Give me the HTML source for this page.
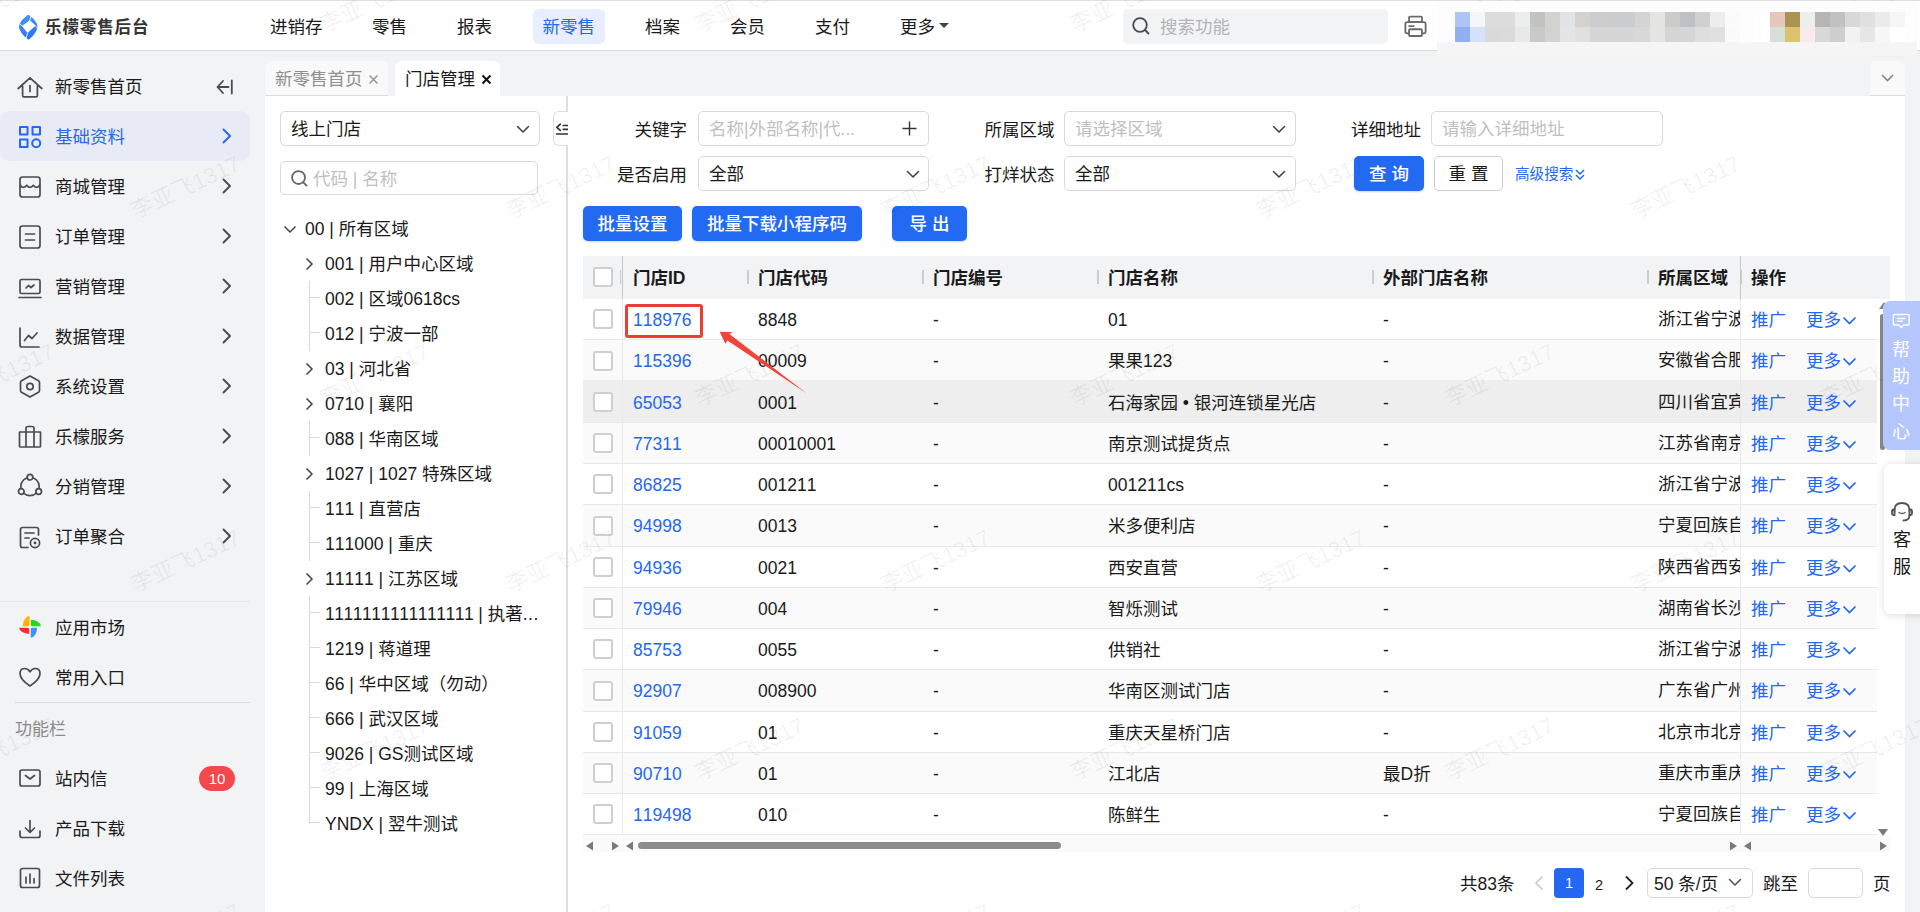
<!DOCTYPE html>
<html lang="zh-CN"><head><meta charset="utf-8"><title>门店管理</title>
<style>
*{box-sizing:border-box;margin:0;padding:0}
html,body{width:1920px;height:912px;overflow:hidden}
body{position:relative;background:#f2f3f5;font-family:"Liberation Sans", "Noto Sans CJK SC", sans-serif;font-size:17.5px;color:#1a1a1a;line-height:1;font-kerning:none}
.abs{position:absolute}
#top{position:absolute;left:0;top:0;width:1920px;height:51px;background:#fff;border-top:1px solid #dddfdd;border-bottom:1px solid #d9d9d9}
.nav{position:absolute;top:0;height:50px;line-height:52px;font-size:17.5px;color:#1a1a1a;white-space:nowrap}
.nav.on{top:8px;height:35px;line-height:36px;background:#e8eefd;color:#2468f2;border-radius:6px;padding:0 9.5px}
.t{position:absolute;white-space:nowrap;transform:translateY(-50%);margin-top:1px}
#side{position:absolute;left:0;top:51px;width:265px;height:861px;background:#f2f3f5}
.mi{position:absolute;left:0;width:250px;height:50px;border-radius:10px}
.mi.on{background:#e8ebf6;color:#2468f2}
.mi .tx{position:absolute;left:55px;top:0;line-height:52px;white-space:nowrap}
.mi svg{position:absolute}
.ic{fill:none;stroke:#4a4a55;stroke-width:1.7;stroke-linecap:round;stroke-linejoin:round}

.inp{position:absolute;height:35px;border:1px solid #d9d9d9;border-radius:5px;background:#fff}
.ph{color:#bfbfbf}
.tr{position:absolute;white-space:nowrap;transform:translateY(-50%);margin-top:1px}

#wm{z-index:3;position:absolute;left:0;top:0;width:1920px;height:912px;overflow:hidden;pointer-events:none}
#wm span{position:absolute;white-space:nowrap;font-size:22.500px;color:rgba(0,0,0,.058);transform:translate(-50%,-50%) rotate(-25deg)}
</style></head>
<body>
<div id="top">
<svg class="abs" style="left:17.800px;top:13.200px" width="20.300" height="26.560" viewBox="100 105 260 340"><defs><linearGradient id="lg" x1="0" y1="0" x2="0.300" y2="1"><stop offset="0" stop-color="#4b97f8"/><stop offset="1" stop-color="#2a74f5"/></linearGradient></defs><path d="M232 116 C290 150 345 215 350 265 C345 330 290 395 235 435 C175 395 118 330 113 265 C118 215 175 150 232 116Z" fill="url(#lg)"/><path d="M250 186 L326 252 L222 348 L150 258Z" fill="#fff"/><path d="M268 118 L250 192 M320 252 L356 296 M224 344 L200 425 M154 258 L108 218" stroke="#fff" stroke-width="11" fill="none"/></svg>
<div class="t" style="left:45px;top:26px;font-size:16.500px;font-weight:bold;color:#333;letter-spacing:0.900px;margin-top:0">乐檬零售后台</div>
<div class="nav" style="left:270px">进销存</div>
<div class="nav" style="left:372px">零售</div>
<div class="nav" style="left:457px">报表</div>
<div class="nav" style="left:645px">档案</div>
<div class="nav" style="left:730px">会员</div>
<div class="nav" style="left:815px">支付</div>
<div class="nav" style="left:900px">更多</div>
<div class="nav on" style="left:533px">新零售</div>
<div class="abs" style="left:939px;top:22px;width:0;height:0;border-left:5px solid transparent;border-right:5px solid transparent;border-top:5px solid #444"></div>
<div class="abs" style="left:1123px;top:8px;width:265px;height:35px;background:#f2f3f5;border-radius:5px"></div>
<svg class="abs" style="left:1131px;top:15px" width="20" height="20" viewBox="0 0 20 20"><circle cx="9" cy="9" r="6.8" class="ic" style="stroke:#4a4a4a;stroke-width:1.8"/><path d="M14 14 L17.5 17.5" class="ic" style="stroke:#4a4a4a;stroke-width:1.8"/></svg>
<div class="t" style="left:1160px;top:26px;color:#b3b3b3">搜索功能</div>
</div>
<div id="side">
<div class="mi" style="top:10px">
<svg style="left:17px;top:13.5px;" width="26" height="24" viewBox="0 0 26 24"><path class="ic" d="M1.200 13.500 L13 2.800 L24.800 13.500 M5.600 10.500 V20.500 Q5.600 21.900 7 21.900 H19 Q20.400 21.900 20.400 20.500 V10.500 M13 10.500 V16.500"/></svg>
<span class="tx">新零售首页</span>
<svg style="left:216px;top:15px;" width="18" height="20" viewBox="0 0 18 20"><path class="ic" d="M1.500 11 H12.500 M7 5 L1.500 11 L7 17 M15.800 4.500 V17.500" style="stroke-width:1.8"/></svg>
</div>
<div class="mi on" style="top:60px">
<svg style="left:17px;top:13.5px;" width="26" height="24" viewBox="0 0 26 24"><g class="ic" style="stroke:#2468f2;stroke-width:2"><rect x="3" y="2" width="7.5" height="7.5"/><rect x="15.5" y="2" width="7.5" height="7.5"/><rect x="3" y="14.500" width="7.5" height="7.5"/><circle cx="19.2" cy="18.2" r="4"/></g></svg>
<span class="tx">基础资料</span>
<svg style="left:220.5px;top:16px;" width="11" height="18" viewBox="0 0 11 18"><path class="ic" d="M2.500 2.500 L9 9 L2.500 15.500" style="stroke-width:1.9;stroke:#2468f2"/></svg>
</div>
<div class="mi" style="top:110px">
<svg style="left:17px;top:13.5px;" width="26" height="24" viewBox="0 0 26 24"><path class="ic" d="M3 4.5 Q3 2 5.500 2 H20.500 Q23 2 23 4.500 V19.500 Q23 22 20.500 22 H5.500 Q3 22 3 19.500 Z M3 8.500 Q3.500 12.300 6.500 12.300 Q8.500 12.300 9.700 10.300 Q11 12.300 13 12.300 Q15 12.300 16.300 10.300 Q17.500 12.300 19.500 12.300 Q22.500 12.300 23 8.500"/></svg>
<span class="tx">商城管理</span>
<svg style="left:220.5px;top:16px;" width="11" height="18" viewBox="0 0 11 18"><path class="ic"  d="M2.500 2.500 L9 9 L2.500 15.500" style="stroke-width:1.9"/></svg>
</div>
<div class="mi" style="top:160px">
<svg style="left:17px;top:12.5px;" width="26" height="26" viewBox="0 0 26 26"><path class="ic" d="M3 4.5 Q3 2 5.500 2 H20.500 Q23 2 23 4.500 V21.500 Q23 24 20.500 24 H5.500 Q3 24 3 21.500 Z M8.5 10 H17.5 M8.5 16 H17.5"/></svg>
<span class="tx">订单管理</span>
<svg style="left:220.5px;top:16px;" width="11" height="18" viewBox="0 0 11 18"><path class="ic"  d="M2.500 2.500 L9 9 L2.500 15.500" style="stroke-width:1.9"/></svg>
</div>
<div class="mi" style="top:210px">
<svg style="left:17px;top:15.5px;" width="26" height="23" viewBox="0 0 26 23"><path class="ic" d="M3 4 Q3 2.500 4.500 2.500 H21.500 Q23 2.500 23 4 V15 Q23 16.500 21.500 16.500 H4.500 Q3 16.500 3 15 Z M2 20.5 H24 M9 11 L11.5 8.5 L14 10.5 L17 8"/></svg>
<span class="tx">营销管理</span>
<svg style="left:220.5px;top:16px;" width="11" height="18" viewBox="0 0 11 18"><path class="ic"  d="M2.500 2.500 L9 9 L2.500 15.500" style="stroke-width:1.9"/></svg>
</div>
<div class="mi" style="top:260px">
<svg style="left:17px;top:14.5px;" width="26" height="23" viewBox="0 0 26 23"><path class="ic" d="M3 2 V19 Q3 21 5 21 H22 M7.5 14.5 L11.5 9.500 L15 12.500 L20 7"/></svg>
<span class="tx">数据管理</span>
<svg style="left:220.5px;top:16px;" width="11" height="18" viewBox="0 0 11 18"><path class="ic"  d="M2.500 2.500 L9 9 L2.500 15.500" style="stroke-width:1.9"/></svg>
</div>
<div class="mi" style="top:310px">
<svg style="left:17px;top:13px;" width="26" height="25" viewBox="0 0 26 25"><path class="ic" d="M13 2 L21.5 6.800 Q22.500 7.400 22.500 8.500 V16.500 Q22.500 17.600 21.500 18.200 L13 23 L4.500 18.200 Q3.500 17.600 3.500 16.500 V8.500 Q3.500 7.400 4.500 6.800 Z"/><circle class="ic" cx="13" cy="12.5" r="3.2"/></svg>
<span class="tx">系统设置</span>
<svg style="left:220.5px;top:16px;" width="11" height="18" viewBox="0 0 11 18"><path class="ic"  d="M2.500 2.500 L9 9 L2.500 15.500" style="stroke-width:1.9"/></svg>
</div>
<div class="mi" style="top:360px">
<svg style="left:17px;top:13px;" width="26" height="25" viewBox="0 0 26 25"><path class="ic" d="M2.500 8 H23.500 V22 Q23.500 23 22.500 23 H3.500 Q2.500 23 2.500 22 Z M9 8 V4.500 Q9 2.500 11 2.500 H15 Q17 2.500 17 4.500 V8 M9 8 V23 M17 8 V23"/></svg>
<span class="tx">乐檬服务</span>
<svg style="left:220.5px;top:16px;" width="11" height="18" viewBox="0 0 11 18"><path class="ic"  d="M2.500 2.500 L9 9 L2.500 15.500" style="stroke-width:1.9"/></svg>
</div>
<div class="mi" style="top:410px">
<svg style="left:17px;top:12px;" width="26" height="26" viewBox="0 0 26 26"><g class="ic"><circle cx="13" cy="13.5" r="9.2"/><circle cx="13" cy="4.2" r="2.8" fill="#f2f3f5"/><circle cx="4.3" cy="18.5" r="2.8" fill="#f2f3f5"/><circle cx="21.700" cy="18.500" r="2.800" fill="#f2f3f5"/></g></svg>
<span class="tx">分销管理</span>
<svg style="left:220.5px;top:16px;" width="11" height="18" viewBox="0 0 11 18"><path class="ic"  d="M2.500 2.500 L9 9 L2.500 15.500" style="stroke-width:1.9"/></svg>
</div>
<div class="mi" style="top:460px">
<svg style="left:17px;top:14px;" width="26" height="26" viewBox="0 0 26 26"><path class="ic" d="M11 22.500 H5.500 Q3.500 22.500 3.500 20.500 V4.500 Q3.500 2.500 5.500 2.500 H19.500 Q21.500 2.500 21.500 4.500 V10 M8 8 H17 M8 13 H12"/><circle class="ic" cx="18" cy="18" r="4.6"/><circle cx="18" cy="18" r="1.4" fill="#4a4a55"/></svg>
<span class="tx">订单聚合</span>
<svg style="left:220.5px;top:16px;" width="11" height="18" viewBox="0 0 11 18"><path class="ic"  d="M2.500 2.500 L9 9 L2.500 15.500" style="stroke-width:1.9"/></svg>
</div>
<div class="abs" style="left:0;top:550px;width:250px;height:1px;background:#e6e7ea"></div>
<div class="mi" style="top:551px">
<svg style="left:17px;top:11px;" width="26" height="26" viewBox="0 0 26 26"><path d="M12.500 3.100 A6.700 10.100 0 0 0 5.830 13.200 L12.500 13.200Z" fill="#ffb300"/><path d="M13.730 6.800 A10.100 6.400 0 0 1 23.850 13.200 L13.730 13.200Z" fill="#2ad52a"/><path d="M20.050 14.700 A6.300 10.100 0 0 1 13.730 24.800 L13.730 14.700Z" fill="#3395ff"/><path d="M2.130 14.700 A10.100 6.200 0 0 0 12.250 20.900 L12.250 14.700Z" fill="#ff2d2d"/><circle cx="13" cy="14" r="1.700" fill="#fff" opacity=".9"/></svg>
<span class="tx">应用市场</span></div>
<div class="mi" style="top:601px">
<svg style="left:17px;top:13px;" width="26" height="24" viewBox="0 0 26 24"><path class="ic" d="M13 21 Q3 14.500 3 8.500 Q3 3.500 7.800 3.500 Q11 3.500 13 6.800 Q15 3.500 18.200 3.500 Q23 3.500 23 8.500 Q23 14.500 13 21 Z"/></svg>
<span class="tx">常用入口</span></div>
<div class="abs" style="left:15px;top:651px;width:235px;height:1px;background:#d8d9dc"></div>
<div class="t" style="left:15px;top:677px;font-size:17px;color:#8c8c8c">功能栏</div>
<div class="mi" style="top:702px">
<svg style="left:17px;top:14px;" width="26" height="22" viewBox="0 0 26 22"><path class="ic" d="M3 5 Q3 3 5 3 H21 Q23 3 23 5 V17 Q23 19 21 19 H5 Q3 19 3 17 Z M8.5 8.500 L13 12 L17.500 8.500"/></svg>
<span class="tx">站内信</span>
<span class="abs" style="left:199px;top:13px;width:36px;height:25px;border-radius:13px;background:#f5484d;color:#fff;font-size:15px;line-height:25px;text-align:center">10</span></div>
<div class="mi" style="top:752px">
<svg style="left:17px;top:15px;" width="26" height="22" viewBox="0 0 26 22"><path class="ic" d="M3 13 V17.500 Q3 19.500 5 19.500 H21 Q23 19.500 23 17.500 V13 M13 2.500 V14 M8.500 10 L13 14.500 L17.500 10"/></svg>
<span class="tx">产品下载</span></div>
<div class="mi" style="top:802px">
<svg style="left:17px;top:13px;" width="26" height="24" viewBox="0 0 26 24"><path class="ic" d="M3.500 4.500 Q3.500 2.500 5.500 2.500 H20.500 Q22.500 2.500 22.500 4.500 V19.500 Q22.500 21.500 20.500 21.500 H5.500 Q3.500 21.500 3.500 19.500 Z M9 11 V17 M13 8 V17 M17 12.500 V17"/></svg>
<span class="tx">文件列表</span></div>
</div>
<div class="abs" style="left:265px;top:61px;width:123px;height:35px;background:#f9f9f9;border-radius:6px 6px 0 0;border-bottom:1px solid #dcdcdc"></div>
<div class="t" style="left:275px;top:79px;color:#8f8f8f">新零售首页</div>
<svg class="abs" style="left:368px;top:74px" width="11" height="11" viewBox="0 0 11 11"><path d="M1.500 1.500 L9.500 9.500 M9.500 1.500 L1.500 9.500" stroke="#9a9a9a" stroke-width="1.6" fill="none"/></svg>
<div class="abs" style="left:395px;top:61px;width:105px;height:36px;background:#fff;border-radius:6px 6px 0 0"></div>
<div class="t" style="left:405px;top:79px;color:#1a1a1a">门店管理</div>
<svg class="abs" style="left:481px;top:74px" width="11" height="11" viewBox="0 0 11 11"><path d="M1.500 1.500 L9.500 9.500 M9.500 1.500 L1.500 9.500" stroke="#111" stroke-width="2" fill="none"/></svg>
<div class="abs" style="left:1870px;top:61px;width:35px;height:35px;background:#f9f9f9;border-radius:6px 6px 0 0;border-bottom:1px solid #dcdcdc"></div>
<svg class="abs" style="left:1880px;top:73px" width="15" height="10" viewBox="0 0 15 10"><path d="M2 2 L7.500 7.500 L13 2" stroke="#858585" stroke-width="1.6" fill="none"/></svg>
<div id="panel" class="abs" style="left:265px;top:96px;width:1640px;height:816px;background:#fff"></div>
<div class="abs" style="left:566px;top:96px;width:2px;height:816px;background:#dedede"></div>
<div class="abs" style="left:553px;top:111px;width:15px;height:35px;background:#fff;border:1px solid #dedede;border-right:none;border-radius:6px 0 0 6px"></div>
<svg class="abs" style="left:555px;top:121px" width="13" height="16" viewBox="0 0 13 16"><path d="M5.300 3.200 L1.800 6.300 L5.300 9.400 M8.300 4.500 H13 M8.300 8.300 H13 M1.500 13 H13" stroke="#333" stroke-width="1.700" fill="none" stroke-linecap="round" stroke-linejoin="round"/></svg>
<div class="inp" style="left:280px;top:111px;width:260px"></div>
<div class="t" style="left:291px;top:129px">线上门店</div>
<svg class="abs" style="left:516px;top:125px" width="14" height="9" viewBox="0 0 14 9"><path d="M1.500 1.500 L7 7 L12.500 1.500" stroke="#444" stroke-width="1.6" fill="none" stroke-linecap="round" stroke-linejoin="round"/></svg>
<div class="inp" style="left:280px;top:161px;width:258px;height:34px"></div>
<svg class="abs" style="left:290px;top:168.500px" width="19" height="19" viewBox="0 0 20 20"><circle cx="9" cy="9" r="6.8" class="ic" style="stroke:#666;stroke-width:1.9"/><path d="M14 14 L17.5 17.5" class="ic" style="stroke:#666;stroke-width:1.9"/></svg>
<div class="t ph" style="left:313px;top:179px">代码 | 名称</div>
<div class="t" style="left:305px;top:228.5px">00 | 所有区域</div>
<svg class="abs" style="left:283px;top:224.5px" width="14" height="9" viewBox="0 0 14 9"><path d="M1.500 1.500 L7 7 L12.500 1.500" stroke="#444" stroke-width="1.5" fill="none"/></svg>
<div class="t" style="left:325px;top:263.5px">001 | 用户中心区域</div>
<svg class="abs" style="left:305px;top:256.5px" width="9" height="14" viewBox="0 0 9 14"><path d="M1.500 1.500 L7 7 L1.500 12.500" stroke="#444" stroke-width="1.5" fill="none"/></svg>
<div class="t" style="left:325px;top:298.5px">002 | 区域0618cs</div>
<div class="abs" style="left:309px;top:281px;width:1px;height:35px;background:#d9d9d9"></div>
<div class="abs" style="left:309px;top:297px;width:11px;height:1px;background:#d9d9d9"></div>
<div class="t" style="left:325px;top:333.5px">012 | 宁波一部</div>
<div class="abs" style="left:309px;top:316px;width:1px;height:35px;background:#d9d9d9"></div>
<div class="abs" style="left:309px;top:332px;width:11px;height:1px;background:#d9d9d9"></div>
<div class="t" style="left:325px;top:368.5px">03 | 河北省</div>
<svg class="abs" style="left:305px;top:361.5px" width="9" height="14" viewBox="0 0 9 14"><path d="M1.500 1.500 L7 7 L1.500 12.500" stroke="#444" stroke-width="1.5" fill="none"/></svg>
<div class="t" style="left:325px;top:403.5px">0710 | 襄阳</div>
<svg class="abs" style="left:305px;top:396.5px" width="9" height="14" viewBox="0 0 9 14"><path d="M1.500 1.500 L7 7 L1.500 12.500" stroke="#444" stroke-width="1.5" fill="none"/></svg>
<div class="t" style="left:325px;top:438.5px">088 | 华南区域</div>
<div class="abs" style="left:309px;top:421px;width:1px;height:35px;background:#d9d9d9"></div>
<div class="abs" style="left:309px;top:437px;width:11px;height:1px;background:#d9d9d9"></div>
<div class="t" style="left:325px;top:473.5px">1027 | 1027 特殊区域</div>
<svg class="abs" style="left:305px;top:466.5px" width="9" height="14" viewBox="0 0 9 14"><path d="M1.500 1.500 L7 7 L1.500 12.500" stroke="#444" stroke-width="1.5" fill="none"/></svg>
<div class="t" style="left:325px;top:508.5px">111 | 直营店</div>
<div class="abs" style="left:309px;top:491px;width:1px;height:35px;background:#d9d9d9"></div>
<div class="abs" style="left:309px;top:507px;width:11px;height:1px;background:#d9d9d9"></div>
<div class="t" style="left:325px;top:543.5px">111000 | 重庆</div>
<div class="abs" style="left:309px;top:526px;width:1px;height:35px;background:#d9d9d9"></div>
<div class="abs" style="left:309px;top:542px;width:11px;height:1px;background:#d9d9d9"></div>
<div class="t" style="left:325px;top:578.5px">11111 | 江苏区域</div>
<svg class="abs" style="left:305px;top:571.5px" width="9" height="14" viewBox="0 0 9 14"><path d="M1.500 1.500 L7 7 L1.500 12.500" stroke="#444" stroke-width="1.5" fill="none"/></svg>
<div class="t" style="left:325px;top:613.5px"><span style="font-kerning:none;letter-spacing:-0.460px">1111111111111111</span> | 执著<span style="letter-spacing:0.600px">...</span></div>
<div class="abs" style="left:309px;top:596px;width:1px;height:35px;background:#d9d9d9"></div>
<div class="abs" style="left:309px;top:612px;width:11px;height:1px;background:#d9d9d9"></div>
<div class="t" style="left:325px;top:648.5px">1219 | 蒋道理</div>
<div class="abs" style="left:309px;top:631px;width:1px;height:35px;background:#d9d9d9"></div>
<div class="abs" style="left:309px;top:647px;width:11px;height:1px;background:#d9d9d9"></div>
<div class="t" style="left:325px;top:683.5px">66 | 华中区域（勿动）</div>
<div class="abs" style="left:309px;top:666px;width:1px;height:35px;background:#d9d9d9"></div>
<div class="abs" style="left:309px;top:682px;width:11px;height:1px;background:#d9d9d9"></div>
<div class="t" style="left:325px;top:718.5px">666 | 武汉区域</div>
<div class="abs" style="left:309px;top:701px;width:1px;height:35px;background:#d9d9d9"></div>
<div class="abs" style="left:309px;top:717px;width:11px;height:1px;background:#d9d9d9"></div>
<div class="t" style="left:325px;top:753.5px">9026 | GS测试区域</div>
<div class="abs" style="left:309px;top:736px;width:1px;height:35px;background:#d9d9d9"></div>
<div class="abs" style="left:309px;top:752px;width:11px;height:1px;background:#d9d9d9"></div>
<div class="t" style="left:325px;top:788.5px">99 | 上海区域</div>
<div class="abs" style="left:309px;top:771px;width:1px;height:35px;background:#d9d9d9"></div>
<div class="abs" style="left:309px;top:787px;width:11px;height:1px;background:#d9d9d9"></div>
<div class="t" style="left:325px;top:823.5px">YNDX | 翌牛测试</div>
<div class="abs" style="left:309px;top:806px;width:1px;height:17.5px;background:#d9d9d9"></div>
<div class="abs" style="left:309px;top:822px;width:11px;height:1px;background:#d9d9d9"></div>
<div class="tr" style="right:1233px;top:129.5px">关键字</div>
<div class="tr" style="right:1233px;top:174.5px">是否启用</div>
<div class="tr" style="right:865.5px;top:129.5px">所属区域</div>
<div class="tr" style="right:865.5px;top:174.5px">打烊状态</div>
<div class="tr" style="right:499px;top:129.5px">详细地址</div>
<div class="inp" style="left:698px;top:111px;width:231px"></div>
<div class="t ph" style="left:709px;top:129px">名称|外部名称|代...</div>
<svg class="abs" style="left:902px;top:121px" width="15" height="15" viewBox="0 0 15 15"><path d="M7.500 0.500 V14.500 M0.500 7.500 H14.500" stroke="#333" stroke-width="1.4"/></svg>
<div class="inp" style="left:698px;top:156px;width:231px"></div>
<div class="t" style="left:709px;top:174px">全部</div>
<svg class="abs" style="left:906px;top:170px" width="14" height="9" viewBox="0 0 14 9"><path d="M1.500 1.500 L7 7 L12.500 1.500" stroke="#444" stroke-width="1.6" fill="none" stroke-linecap="round" stroke-linejoin="round"/></svg>
<div class="inp" style="left:1064px;top:111px;width:232px"></div>
<div class="t ph" style="left:1075px;top:129px">请选择区域</div>
<svg class="abs" style="left:1272px;top:125px" width="14" height="9" viewBox="0 0 14 9"><path d="M1.500 1.500 L7 7 L12.500 1.500" stroke="#444" stroke-width="1.6" fill="none" stroke-linecap="round" stroke-linejoin="round"/></svg>
<div class="inp" style="left:1064px;top:156px;width:232px"></div>
<div class="t" style="left:1075px;top:174px">全部</div>
<svg class="abs" style="left:1272px;top:170px" width="14" height="9" viewBox="0 0 14 9"><path d="M1.500 1.500 L7 7 L12.500 1.500" stroke="#444" stroke-width="1.6" fill="none" stroke-linecap="round" stroke-linejoin="round"/></svg>
<div class="inp" style="left:1431px;top:111px;width:232px"></div>
<div class="t ph" style="left:1442px;top:129px">请输入详细地址</div>
<div class="abs" style="left:1354px;top:156px;width:70px;height:35px;border-radius:5px;text-align:center;line-height:37px;white-space:nowrap;background:#236af2;color:#fff;font-weight:500;box-shadow:0 1px 2px rgba(36,104,242,.25)">查 询</div>
<div class="abs" style="left:1434px;top:156px;width:69px;height:35px;border-radius:5px;text-align:center;line-height:35px;white-space:nowrap;background:#fff;color:#1a1a1a;border:1px solid #ccc">重 置</div>
<div class="t" style="left:1515px;top:173px;font-size:14.6px;color:#2468f2">高级搜索</div>
<svg class="abs" style="left:1574px;top:167.500px" width="12" height="13" viewBox="0 0 12 13"><path d="M2 2 L6 6 L10 2 M2 7 L6 11 L10 7" stroke="#2468f2" stroke-width="1.5" fill="none"/></svg>
<div class="abs" style="left:583px;top:206px;width:99px;height:35px;border-radius:5px;text-align:center;line-height:37px;white-space:nowrap;background:#236af2;color:#fff;font-weight:500;box-shadow:0 1px 2px rgba(36,104,242,.25)">批量设置</div>
<div class="abs" style="left:692px;top:206px;width:170px;height:35px;border-radius:5px;text-align:center;line-height:37px;white-space:nowrap;background:#236af2;color:#fff;font-weight:500;box-shadow:0 1px 2px rgba(36,104,242,.25)">批量下载小程序码</div>
<div class="abs" style="left:892px;top:206px;width:75px;height:35px;border-radius:5px;text-align:center;line-height:37px;white-space:nowrap;background:#236af2;color:#fff;font-weight:500;box-shadow:0 1px 2px rgba(36,104,242,.25)">导 出</div>
<div class="abs" style="left:583px;top:256px;width:1307px;height:43px;background:#f2f3f5"></div>
<div class="abs" style="left:592.500px;top:267px;width:20px;height:20px;border:2px solid #cfcfcf;border-radius:3px;background:#fff"></div>
<div class="t" style="left:633px;top:277.5px;font-weight:bold">门店ID</div>
<div class="t" style="left:758px;top:277.5px;font-weight:bold">门店代码</div>
<div class="abs" style="left:747px;top:270px;width:2px;height:14px;background:#ccc"></div>
<div class="t" style="left:933px;top:277.5px;font-weight:bold">门店编号</div>
<div class="abs" style="left:922px;top:270px;width:2px;height:14px;background:#ccc"></div>
<div class="t" style="left:1108px;top:277.5px;font-weight:bold">门店名称</div>
<div class="abs" style="left:1097px;top:270px;width:2px;height:14px;background:#ccc"></div>
<div class="t" style="left:1383px;top:277.5px;font-weight:bold">外部门店名称</div>
<div class="abs" style="left:1372px;top:270px;width:2px;height:14px;background:#ccc"></div>
<div class="t" style="left:1658px;top:277.5px;font-weight:bold">所属区域</div>
<div class="abs" style="left:1647px;top:270px;width:2px;height:14px;background:#ccc"></div>
<div class="t" style="left:1751px;top:277.5px;font-weight:bold">操作</div>
<div class="abs" style="left:620px;top:270px;width:1px;height:14px;background:#ccc"></div>
<div class="abs" style="left:1741px;top:270px;width:1px;height:14px;background:#ccc"></div>
<div class="abs" style="left:583px;top:299px;width:1294px;height:41.25px;background:#fff;border-bottom:1px solid #e8e8e8"></div>
<div class="abs" style="left:592.500px;top:309.25px;width:20px;height:20px;border:2px solid #cfcfcf;border-radius:3px;background:#fff"></div>
<div class="t" style="left:633px;top:320px;color:#2468f2;">118976</div>
<div class="t" style="left:758px;top:320px;">8848</div>
<div class="t" style="left:933px;top:320px;">-</div>
<div class="t" style="left:1108px;top:320px;">01</div>
<div class="t" style="left:1383px;top:320px;">-</div>
<div class="abs" style="left:1658px;top:305px;width:82.500px;height:30px;line-height:29px;overflow:hidden;white-space:nowrap">浙江省宁波</div>
<div class="t" style="left:1751px;top:320px;color:#2468f2">推广</div>
<div class="t" style="left:1806px;top:320px;color:#2468f2">更多</div>
<svg class="abs" style="left:1842px;top:316px" width="15" height="10" viewBox="0 0 15 10"><path d="M1.500 1.500 L7.500 7.500 L13.500 1.500" stroke="#2468f2" stroke-width="1.7" fill="none"/></svg>
<div class="abs" style="left:583px;top:340.25px;width:1294px;height:41.25px;background:#fafafa;border-bottom:1px solid #e8e8e8"></div>
<div class="abs" style="left:592.500px;top:350.5px;width:20px;height:20px;border:2px solid #cfcfcf;border-radius:3px;background:#fff"></div>
<div class="t" style="left:633px;top:361.25px;color:#2468f2;">115396</div>
<div class="t" style="left:758px;top:361.25px;">00009</div>
<div class="t" style="left:933px;top:361.25px;">-</div>
<div class="t" style="left:1108px;top:361.25px;">果果123</div>
<div class="t" style="left:1383px;top:361.25px;">-</div>
<div class="abs" style="left:1658px;top:346.25px;width:82.500px;height:30px;line-height:29px;overflow:hidden;white-space:nowrap">安徽省合肥</div>
<div class="t" style="left:1751px;top:361.25px;color:#2468f2">推广</div>
<div class="t" style="left:1806px;top:361.25px;color:#2468f2">更多</div>
<svg class="abs" style="left:1842px;top:357.25px" width="15" height="10" viewBox="0 0 15 10"><path d="M1.500 1.500 L7.500 7.500 L13.500 1.500" stroke="#2468f2" stroke-width="1.7" fill="none"/></svg>
<div class="abs" style="left:583px;top:380.25px;width:1294px;height:42.5px;background:#eeeeee;border-bottom:1px solid #e8e8e8"></div>
<div class="abs" style="left:592.500px;top:391.75px;width:20px;height:20px;border:2px solid #cfcfcf;border-radius:3px;background:#fff"></div>
<div class="t" style="left:633px;top:402.5px;color:#2468f2;">65053</div>
<div class="t" style="left:758px;top:402.5px;">0001</div>
<div class="t" style="left:933px;top:402.5px;">-</div>
<div class="t" style="left:1108px;top:402.5px;">石海家园 • 银河连锁星光店</div>
<div class="t" style="left:1383px;top:402.5px;">-</div>
<div class="abs" style="left:1658px;top:387.5px;width:82.500px;height:30px;line-height:29px;overflow:hidden;white-space:nowrap">四川省宜宾</div>
<div class="t" style="left:1751px;top:402.5px;color:#2468f2">推广</div>
<div class="t" style="left:1806px;top:402.5px;color:#2468f2">更多</div>
<svg class="abs" style="left:1842px;top:398.5px" width="15" height="10" viewBox="0 0 15 10"><path d="M1.500 1.500 L7.500 7.500 L13.500 1.500" stroke="#2468f2" stroke-width="1.7" fill="none"/></svg>
<div class="abs" style="left:583px;top:422.75px;width:1294px;height:41.25px;background:#fafafa;border-bottom:1px solid #e8e8e8"></div>
<div class="abs" style="left:592.500px;top:433px;width:20px;height:20px;border:2px solid #cfcfcf;border-radius:3px;background:#fff"></div>
<div class="t" style="left:633px;top:443.75px;color:#2468f2;">77311</div>
<div class="t" style="left:758px;top:443.75px;">00010001</div>
<div class="t" style="left:933px;top:443.75px;">-</div>
<div class="t" style="left:1108px;top:443.75px;">南京测试提货点</div>
<div class="t" style="left:1383px;top:443.75px;">-</div>
<div class="abs" style="left:1658px;top:428.75px;width:82.500px;height:30px;line-height:29px;overflow:hidden;white-space:nowrap">江苏省南京</div>
<div class="t" style="left:1751px;top:443.75px;color:#2468f2">推广</div>
<div class="t" style="left:1806px;top:443.75px;color:#2468f2">更多</div>
<svg class="abs" style="left:1842px;top:439.75px" width="15" height="10" viewBox="0 0 15 10"><path d="M1.500 1.500 L7.500 7.500 L13.500 1.500" stroke="#2468f2" stroke-width="1.7" fill="none"/></svg>
<div class="abs" style="left:583px;top:464px;width:1294px;height:41.25px;background:#fff;border-bottom:1px solid #e8e8e8"></div>
<div class="abs" style="left:592.500px;top:474.25px;width:20px;height:20px;border:2px solid #cfcfcf;border-radius:3px;background:#fff"></div>
<div class="t" style="left:633px;top:485px;color:#2468f2;">86825</div>
<div class="t" style="left:758px;top:485px;">001211</div>
<div class="t" style="left:933px;top:485px;">-</div>
<div class="t" style="left:1108px;top:485px;">001211cs</div>
<div class="t" style="left:1383px;top:485px;">-</div>
<div class="abs" style="left:1658px;top:470px;width:82.500px;height:30px;line-height:29px;overflow:hidden;white-space:nowrap">浙江省宁波</div>
<div class="t" style="left:1751px;top:485px;color:#2468f2">推广</div>
<div class="t" style="left:1806px;top:485px;color:#2468f2">更多</div>
<svg class="abs" style="left:1842px;top:481px" width="15" height="10" viewBox="0 0 15 10"><path d="M1.500 1.500 L7.500 7.500 L13.500 1.500" stroke="#2468f2" stroke-width="1.7" fill="none"/></svg>
<div class="abs" style="left:583px;top:505.25px;width:1294px;height:41.25px;background:#fafafa;border-bottom:1px solid #e8e8e8"></div>
<div class="abs" style="left:592.500px;top:515.5px;width:20px;height:20px;border:2px solid #cfcfcf;border-radius:3px;background:#fff"></div>
<div class="t" style="left:633px;top:526.25px;color:#2468f2;">94998</div>
<div class="t" style="left:758px;top:526.25px;">0013</div>
<div class="t" style="left:933px;top:526.25px;">-</div>
<div class="t" style="left:1108px;top:526.25px;">米多便利店</div>
<div class="t" style="left:1383px;top:526.25px;">-</div>
<div class="abs" style="left:1658px;top:511.25px;width:82.500px;height:30px;line-height:29px;overflow:hidden;white-space:nowrap">宁夏回族自</div>
<div class="t" style="left:1751px;top:526.25px;color:#2468f2">推广</div>
<div class="t" style="left:1806px;top:526.25px;color:#2468f2">更多</div>
<svg class="abs" style="left:1842px;top:522.25px" width="15" height="10" viewBox="0 0 15 10"><path d="M1.500 1.500 L7.500 7.500 L13.500 1.500" stroke="#2468f2" stroke-width="1.7" fill="none"/></svg>
<div class="abs" style="left:583px;top:546.5px;width:1294px;height:41.25px;background:#fff;border-bottom:1px solid #e8e8e8"></div>
<div class="abs" style="left:592.500px;top:556.75px;width:20px;height:20px;border:2px solid #cfcfcf;border-radius:3px;background:#fff"></div>
<div class="t" style="left:633px;top:567.5px;color:#2468f2;">94936</div>
<div class="t" style="left:758px;top:567.5px;">0021</div>
<div class="t" style="left:933px;top:567.5px;">-</div>
<div class="t" style="left:1108px;top:567.5px;">西安直营</div>
<div class="t" style="left:1383px;top:567.5px;">-</div>
<div class="abs" style="left:1658px;top:552.5px;width:82.500px;height:30px;line-height:29px;overflow:hidden;white-space:nowrap">陕西省西安</div>
<div class="t" style="left:1751px;top:567.5px;color:#2468f2">推广</div>
<div class="t" style="left:1806px;top:567.5px;color:#2468f2">更多</div>
<svg class="abs" style="left:1842px;top:563.5px" width="15" height="10" viewBox="0 0 15 10"><path d="M1.500 1.500 L7.500 7.500 L13.500 1.500" stroke="#2468f2" stroke-width="1.7" fill="none"/></svg>
<div class="abs" style="left:583px;top:587.75px;width:1294px;height:41.25px;background:#fafafa;border-bottom:1px solid #e8e8e8"></div>
<div class="abs" style="left:592.500px;top:598px;width:20px;height:20px;border:2px solid #cfcfcf;border-radius:3px;background:#fff"></div>
<div class="t" style="left:633px;top:608.75px;color:#2468f2;">79946</div>
<div class="t" style="left:758px;top:608.75px;">004</div>
<div class="t" style="left:933px;top:608.75px;">-</div>
<div class="t" style="left:1108px;top:608.75px;">智烁测试</div>
<div class="t" style="left:1383px;top:608.75px;">-</div>
<div class="abs" style="left:1658px;top:593.75px;width:82.500px;height:30px;line-height:29px;overflow:hidden;white-space:nowrap">湖南省长沙</div>
<div class="t" style="left:1751px;top:608.75px;color:#2468f2">推广</div>
<div class="t" style="left:1806px;top:608.75px;color:#2468f2">更多</div>
<svg class="abs" style="left:1842px;top:604.75px" width="15" height="10" viewBox="0 0 15 10"><path d="M1.500 1.500 L7.500 7.500 L13.500 1.500" stroke="#2468f2" stroke-width="1.7" fill="none"/></svg>
<div class="abs" style="left:583px;top:629px;width:1294px;height:41.25px;background:#fff;border-bottom:1px solid #e8e8e8"></div>
<div class="abs" style="left:592.500px;top:639.25px;width:20px;height:20px;border:2px solid #cfcfcf;border-radius:3px;background:#fff"></div>
<div class="t" style="left:633px;top:650px;color:#2468f2;">85753</div>
<div class="t" style="left:758px;top:650px;">0055</div>
<div class="t" style="left:933px;top:650px;">-</div>
<div class="t" style="left:1108px;top:650px;">供销社</div>
<div class="t" style="left:1383px;top:650px;">-</div>
<div class="abs" style="left:1658px;top:635px;width:82.500px;height:30px;line-height:29px;overflow:hidden;white-space:nowrap">浙江省宁波</div>
<div class="t" style="left:1751px;top:650px;color:#2468f2">推广</div>
<div class="t" style="left:1806px;top:650px;color:#2468f2">更多</div>
<svg class="abs" style="left:1842px;top:646px" width="15" height="10" viewBox="0 0 15 10"><path d="M1.500 1.500 L7.500 7.500 L13.500 1.500" stroke="#2468f2" stroke-width="1.7" fill="none"/></svg>
<div class="abs" style="left:583px;top:670.25px;width:1294px;height:41.25px;background:#fafafa;border-bottom:1px solid #e8e8e8"></div>
<div class="abs" style="left:592.500px;top:680.5px;width:20px;height:20px;border:2px solid #cfcfcf;border-radius:3px;background:#fff"></div>
<div class="t" style="left:633px;top:691.25px;color:#2468f2;">92907</div>
<div class="t" style="left:758px;top:691.25px;">008900</div>
<div class="t" style="left:933px;top:691.25px;">-</div>
<div class="t" style="left:1108px;top:691.25px;">华南区测试门店</div>
<div class="t" style="left:1383px;top:691.25px;">-</div>
<div class="abs" style="left:1658px;top:676.25px;width:82.500px;height:30px;line-height:29px;overflow:hidden;white-space:nowrap">广东省广州</div>
<div class="t" style="left:1751px;top:691.25px;color:#2468f2">推广</div>
<div class="t" style="left:1806px;top:691.25px;color:#2468f2">更多</div>
<svg class="abs" style="left:1842px;top:687.25px" width="15" height="10" viewBox="0 0 15 10"><path d="M1.500 1.500 L7.500 7.500 L13.500 1.500" stroke="#2468f2" stroke-width="1.7" fill="none"/></svg>
<div class="abs" style="left:583px;top:711.5px;width:1294px;height:41.25px;background:#fff;border-bottom:1px solid #e8e8e8"></div>
<div class="abs" style="left:592.500px;top:721.75px;width:20px;height:20px;border:2px solid #cfcfcf;border-radius:3px;background:#fff"></div>
<div class="t" style="left:633px;top:732.5px;color:#2468f2;">91059</div>
<div class="t" style="left:758px;top:732.5px;">01</div>
<div class="t" style="left:933px;top:732.5px;">-</div>
<div class="t" style="left:1108px;top:732.5px;">重庆天星桥门店</div>
<div class="t" style="left:1383px;top:732.5px;">-</div>
<div class="abs" style="left:1658px;top:717.5px;width:82.500px;height:30px;line-height:29px;overflow:hidden;white-space:nowrap">北京市北京</div>
<div class="t" style="left:1751px;top:732.5px;color:#2468f2">推广</div>
<div class="t" style="left:1806px;top:732.5px;color:#2468f2">更多</div>
<svg class="abs" style="left:1842px;top:728.5px" width="15" height="10" viewBox="0 0 15 10"><path d="M1.500 1.500 L7.500 7.500 L13.500 1.500" stroke="#2468f2" stroke-width="1.7" fill="none"/></svg>
<div class="abs" style="left:583px;top:752.75px;width:1294px;height:41.25px;background:#fafafa;border-bottom:1px solid #e8e8e8"></div>
<div class="abs" style="left:592.500px;top:763px;width:20px;height:20px;border:2px solid #cfcfcf;border-radius:3px;background:#fff"></div>
<div class="t" style="left:633px;top:773.75px;color:#2468f2;">90710</div>
<div class="t" style="left:758px;top:773.75px;">01</div>
<div class="t" style="left:933px;top:773.75px;">-</div>
<div class="t" style="left:1108px;top:773.75px;">江北店</div>
<div class="t" style="left:1383px;top:773.75px;">最D折</div>
<div class="abs" style="left:1658px;top:758.75px;width:82.500px;height:30px;line-height:29px;overflow:hidden;white-space:nowrap">重庆市重庆</div>
<div class="t" style="left:1751px;top:773.75px;color:#2468f2">推广</div>
<div class="t" style="left:1806px;top:773.75px;color:#2468f2">更多</div>
<svg class="abs" style="left:1842px;top:769.75px" width="15" height="10" viewBox="0 0 15 10"><path d="M1.500 1.500 L7.500 7.500 L13.500 1.500" stroke="#2468f2" stroke-width="1.7" fill="none"/></svg>
<div class="abs" style="left:583px;top:794px;width:1294px;height:41.25px;background:#fff;border-bottom:1px solid #e8e8e8"></div>
<div class="abs" style="left:592.500px;top:804.25px;width:20px;height:20px;border:2px solid #cfcfcf;border-radius:3px;background:#fff"></div>
<div class="t" style="left:633px;top:815px;color:#2468f2;">119498</div>
<div class="t" style="left:758px;top:815px;">010</div>
<div class="t" style="left:933px;top:815px;">-</div>
<div class="t" style="left:1108px;top:815px;">陈鲜生</div>
<div class="t" style="left:1383px;top:815px;">-</div>
<div class="abs" style="left:1658px;top:800px;width:82.500px;height:30px;line-height:29px;overflow:hidden;white-space:nowrap">宁夏回族自</div>
<div class="t" style="left:1751px;top:815px;color:#2468f2">推广</div>
<div class="t" style="left:1806px;top:815px;color:#2468f2">更多</div>
<svg class="abs" style="left:1842px;top:811px" width="15" height="10" viewBox="0 0 15 10"><path d="M1.500 1.500 L7.500 7.500 L13.500 1.500" stroke="#2468f2" stroke-width="1.7" fill="none"/></svg>
<div class="abs" style="left:622px;top:256px;width:1px;height:43px;background:#c6c6c6"></div><div class="abs" style="left:622px;top:299px;width:1px;height:553px;background:#e9e9e9"></div>
<div class="abs" style="left:1740px;top:256px;width:1px;height:43px;background:#c6c6c6"></div><div class="abs" style="left:1740px;top:299px;width:1px;height:553px;background:#e9e9e9"></div>
<div class="abs" style="left:583px;top:835px;width:1307px;height:17px;background:#fafafa"></div>
<svg class="abs" style="left:586px;top:841px" width="7" height="10"><path d="M7 0.500 L0 5 L7 9.500Z" fill="#7a7a7a"/></svg>
<svg class="abs" style="left:612px;top:841px" width="7" height="10"><path d="M0 0.500 L7 5 L0 9.500Z" fill="#7a7a7a"/></svg>
<svg class="abs" style="left:626px;top:841px" width="7" height="10"><path d="M7 0.500 L0 5 L7 9.500Z" fill="#7a7a7a"/></svg>
<svg class="abs" style="left:1730px;top:841px" width="7" height="10"><path d="M0 0.500 L7 5 L0 9.500Z" fill="#7a7a7a"/></svg>
<svg class="abs" style="left:1744px;top:841px" width="7" height="10"><path d="M7 0.500 L0 5 L7 9.500Z" fill="#7a7a7a"/></svg>
<svg class="abs" style="left:1880px;top:841px" width="7" height="10"><path d="M0 0.500 L7 5 L0 9.500Z" fill="#7a7a7a"/></svg>
<svg class="abs" style="left:1878px;top:829px" width="10" height="7"><path d="M0 0 L5 7 L10 0Z" fill="#7a7a7a"/></svg>
<svg class="abs" style="left:1879px;top:302px" width="10" height="7"><path d="M0 7 L5 0 L10 7Z" fill="#858585"/></svg>
<div class="abs" style="left:638px;top:842px;width:423px;height:7px;border-radius:4px;background:#8c8c8c"></div>
<div class="abs" style="left:1880px;top:314px;width:5px;height:136px;border-radius:3px;background:#858585"></div>
<div class="t" style="left:1460px;top:884px">共83条</div>
<svg class="abs" style="left:1534px;top:875px" width="10" height="16" viewBox="0 0 10 16"><path d="M8.500 1.500 L2 8 L8.500 14.500" stroke="#c8c8c8" stroke-width="1.6" fill="none"/></svg>
<div class="abs" style="left:1554px;top:868px;width:30px;height:30px;border-radius:4px;background:#2468f2;color:#fff;text-align:center;line-height:31px;font-size:14.600px">1</div>
<div class="t" style="left:1595px;top:884px;font-size:14.600px">2</div>
<svg class="abs" style="left:1624px;top:875px" width="11" height="16" viewBox="0 0 11 16"><path d="M2 1.500 L8.500 8 L2 14.500" stroke="#222" stroke-width="1.8" fill="none"/></svg>
<div class="inp" style="left:1647px;top:868px;width:106px;height:30px"></div>
<div class="t" style="left:1654px;top:884px">50 条/页</div>
<svg class="abs" style="left:1728px;top:878px" width="14" height="9" viewBox="0 0 14 9"><path d="M1.500 1.500 L7 7 L12.500 1.500" stroke="#555" stroke-width="1.6" fill="none" stroke-linecap="round" stroke-linejoin="round"/></svg>
<div class="t" style="left:1763px;top:884px">跳至</div>
<div class="inp" style="left:1808px;top:868px;width:55px;height:30px"></div>
<div class="t" style="left:1873px;top:884px">页</div>
<svg class="abs" style="left:1404px;top:15px" width="23" height="22.100" viewBox="0 0 25 24"><g fill="none" stroke="#6a6a6a" stroke-width="2" stroke-linejoin="round"><rect x="5.500" y="1.800" width="14" height="6" rx="1"/><path d="M5.500 20 H3.500 Q1.500 20 1.500 18 V9.800 Q1.500 7.800 3.500 7.800 H21.500 Q23.500 7.800 23.500 9.800 V18 Q23.500 20 21.500 20 H19.500"/><rect x="5.500" y="15.500" width="14" height="7.300" rx="1"/><path d="M5.500 12 H10.500" stroke-linecap="round"/></g></svg>
<div class="abs" style="z-index:5;left:1437px;top:1px;width:480px;height:41px;background:#fdfdfd"></div>
<div class="abs" style="z-index:5;left:1437px;top:42px;width:480px;height:14px;background:#f5f5f5"></div>
<div class="abs" style="z-index:6;left:1455px;top:12px;width:450px;height:30px"><i style="position:absolute;left:0px;top:0;width:15px;height:15px;background:#aec6f7"></i><i style="position:absolute;left:15px;top:0;width:15px;height:15px;background:#f5f6fc"></i><i style="position:absolute;left:30px;top:0;width:15px;height:15px;background:#dcdcdc"></i><i style="position:absolute;left:45px;top:0;width:15px;height:15px;background:#dddcdc"></i><i style="position:absolute;left:60px;top:0;width:15px;height:15px;background:#ecedef"></i><i style="position:absolute;left:75px;top:0;width:15px;height:15px;background:#c2c2c2"></i><i style="position:absolute;left:90px;top:0;width:15px;height:15px;background:#d3d2d0"></i><i style="position:absolute;left:105px;top:0;width:15px;height:15px;background:#e2e3e4"></i><i style="position:absolute;left:120px;top:0;width:15px;height:15px;background:#d3d2d0"></i><i style="position:absolute;left:135px;top:0;width:15px;height:15px;background:#cdcdcf"></i><i style="position:absolute;left:150px;top:0;width:15px;height:15px;background:#cccccd"></i><i style="position:absolute;left:165px;top:0;width:15px;height:15px;background:#cbcccd"></i><i style="position:absolute;left:180px;top:0;width:15px;height:15px;background:#d4d4d4"></i><i style="position:absolute;left:195px;top:0;width:15px;height:15px;background:#e4e4e2"></i><i style="position:absolute;left:210px;top:0;width:15px;height:15px;background:#cccbc9"></i><i style="position:absolute;left:225px;top:0;width:15px;height:15px;background:#bdc1c5"></i><i style="position:absolute;left:240px;top:0;width:15px;height:15px;background:#d0d0ce"></i><i style="position:absolute;left:255px;top:0;width:15px;height:15px;background:#ededeb"></i><i style="position:absolute;left:270px;top:0;width:15px;height:15px;background:#fbfbfb"></i><i style="position:absolute;left:285px;top:0;width:15px;height:15px;background:#fdfdfd"></i><i style="position:absolute;left:300px;top:0;width:15px;height:15px;background:#ffffff"></i><i style="position:absolute;left:315px;top:0;width:15px;height:15px;background:#e7c6bb"></i><i style="position:absolute;left:330px;top:0;width:15px;height:15px;background:#ab9354"></i><i style="position:absolute;left:345px;top:0;width:15px;height:15px;background:#ebf0ec"></i><i style="position:absolute;left:360px;top:0;width:15px;height:15px;background:#b6b5b3"></i><i style="position:absolute;left:375px;top:0;width:15px;height:15px;background:#c0c1c3"></i><i style="position:absolute;left:390px;top:0;width:15px;height:15px;background:#d8d8d6"></i><i style="position:absolute;left:405px;top:0;width:15px;height:15px;background:#dfe0e2"></i><i style="position:absolute;left:420px;top:0;width:15px;height:15px;background:#ebebeb"></i><i style="position:absolute;left:435px;top:0;width:15px;height:15px;background:#f6f6f6"></i><i style="position:absolute;left:0px;top:15px;width:15px;height:15px;background:#91b0f4"></i><i style="position:absolute;left:15px;top:15px;width:15px;height:15px;background:#d6e2fb"></i><i style="position:absolute;left:30px;top:15px;width:15px;height:15px;background:#dadad9"></i><i style="position:absolute;left:45px;top:15px;width:15px;height:15px;background:#dcdbd9"></i><i style="position:absolute;left:60px;top:15px;width:15px;height:15px;background:#e8e9ea"></i><i style="position:absolute;left:75px;top:15px;width:15px;height:15px;background:#c9c9c7"></i><i style="position:absolute;left:90px;top:15px;width:15px;height:15px;background:#d2d2d0"></i><i style="position:absolute;left:105px;top:15px;width:15px;height:15px;background:#e4e4e4"></i><i style="position:absolute;left:120px;top:15px;width:15px;height:15px;background:#e1e0dd"></i><i style="position:absolute;left:135px;top:15px;width:15px;height:15px;background:#d6d6d6"></i><i style="position:absolute;left:150px;top:15px;width:15px;height:15px;background:#d6d6d6"></i><i style="position:absolute;left:165px;top:15px;width:15px;height:15px;background:#d5d6d7"></i><i style="position:absolute;left:180px;top:15px;width:15px;height:15px;background:#d8d8d8"></i><i style="position:absolute;left:195px;top:15px;width:15px;height:15px;background:#e5e5e3"></i><i style="position:absolute;left:210px;top:15px;width:15px;height:15px;background:#d5d5d3"></i><i style="position:absolute;left:225px;top:15px;width:15px;height:15px;background:#d5d6d8"></i><i style="position:absolute;left:240px;top:15px;width:15px;height:15px;background:#dedede"></i><i style="position:absolute;left:255px;top:15px;width:15px;height:15px;background:#e0e0e0"></i><i style="position:absolute;left:270px;top:15px;width:15px;height:15px;background:#fafafa"></i><i style="position:absolute;left:285px;top:15px;width:15px;height:15px;background:#fdfdfd"></i><i style="position:absolute;left:300px;top:15px;width:15px;height:15px;background:#ffffff"></i><i style="position:absolute;left:315px;top:15px;width:15px;height:15px;background:#d6e0d6"></i><i style="position:absolute;left:330px;top:15px;width:15px;height:15px;background:#dcc26f"></i><i style="position:absolute;left:345px;top:15px;width:15px;height:15px;background:#f9eaec"></i><i style="position:absolute;left:360px;top:15px;width:15px;height:15px;background:#d8d8d8"></i><i style="position:absolute;left:375px;top:15px;width:15px;height:15px;background:#d0cfcd"></i><i style="position:absolute;left:390px;top:15px;width:15px;height:15px;background:#f1f2f4"></i><i style="position:absolute;left:405px;top:15px;width:15px;height:15px;background:#e6e6e6"></i><i style="position:absolute;left:420px;top:15px;width:15px;height:15px;background:#f7f7f7"></i><i style="position:absolute;left:435px;top:15px;width:15px;height:15px;background:#ffffff"></i></div>
<div class="abs" style="z-index:4;left:1883px;top:301px;width:40px;height:149px;border-radius:7px 0 0 7px;background:#b4c6fb"></div>
<svg class="abs" style="z-index:4;left:1892px;top:313px" width="18.500" height="17.600" viewBox="0 0 20 19"><path d="M2.500 1.500 H17.500 Q18.500 1.500 18.500 2.500 V12 Q18.500 13 17.500 13 H12.500 L10 15.800 L7.500 13 H2.500 Q1.500 13 1.500 12 V2.500 Q1.500 1.500 2.500 1.500Z M6 6 H14 M6 9 H11" fill="none" stroke="#fff" stroke-width="1.6" stroke-linejoin="round" stroke-linecap="round"/></svg>
<div class="t" style="z-index:4;left:1892px;top:349px;color:#fff;font-size:18px">帮</div>
<div class="t" style="z-index:4;left:1892px;top:376.2px;color:#fff;font-size:18px">助</div>
<div class="t" style="z-index:4;left:1892px;top:403.4px;color:#fff;font-size:18px">中</div>
<div class="t" style="z-index:4;left:1892px;top:430.6px;color:#fff;font-size:18px">心</div>
<div class="abs" style="z-index:4;left:1884px;top:464px;width:40px;height:150px;border-radius:7px 0 0 7px;background:#fff;box-shadow:0 1px 8px rgba(0,0,0,.14)"></div>
<svg class="abs" style="z-index:4;left:1890px;top:500px" width="24" height="24" viewBox="0 0 24 24"><g fill="none" stroke="#50525c" stroke-width="1.800" stroke-linecap="round"><path d="M4.500 12 V10 Q4.500 3 12 3 Q19.500 3 19.500 10 V12"/><path d="M4.500 9.500 H3.500 Q2 9.500 2 11 V13.500 Q2 15 3.500 15 H4.500 Z M19.500 9.500 H20.500 Q22 9.500 22 11 V13.500 Q22 15 20.500 15 H19.500 Z"/><path d="M19.500 15 Q19.500 20.500 13.500 20.500"/><path d="M9 12.500 Q12 14.500 15 12.500" stroke-width="1.3"/></g></svg>
<div class="t" style="z-index:4;left:1893px;top:539px;font-size:18px">客</div>
<div class="t" style="z-index:4;left:1893px;top:566px;font-size:18px">服</div>
<div class="abs" style="z-index:6;left:625px;top:304px;width:78px;height:34px;border:3px solid #ec3e35;border-radius:3px"></div>
<svg class="abs" style="z-index:6;left:715px;top:325px" width="100" height="75" viewBox="715 325 100 75"><path d="M719.700 331.700 L733.200 332.300 L729.400 334 L806.800 393.400 L727.400 340.600 L725.400 343.700 Z" fill="#ee443a"/></svg>
<div id="wm"><span style="left:0px;top:2px">李亚飞1317</span><span style="left:186px;top:188px">李亚飞1317</span><span style="left:375px;top:2px">李亚飞1317</span><span style="left:561px;top:188px">李亚飞1317</span><span style="left:750px;top:2px">李亚飞1317</span><span style="left:936px;top:188px">李亚飞1317</span><span style="left:1125px;top:2px">李亚飞1317</span><span style="left:1311px;top:188px">李亚飞1317</span><span style="left:1500px;top:2px">李亚飞1317</span><span style="left:1686px;top:188px">李亚飞1317</span><span style="left:1875px;top:2px">李亚飞1317</span><span style="left:0px;top:376px">李亚飞1317</span><span style="left:186px;top:562px">李亚飞1317</span><span style="left:375px;top:376px">李亚飞1317</span><span style="left:561px;top:562px">李亚飞1317</span><span style="left:750px;top:376px">李亚飞1317</span><span style="left:936px;top:562px">李亚飞1317</span><span style="left:1125px;top:376px">李亚飞1317</span><span style="left:1311px;top:562px">李亚飞1317</span><span style="left:1500px;top:376px">李亚飞1317</span><span style="left:1686px;top:562px">李亚飞1317</span><span style="left:1875px;top:376px">李亚飞1317</span><span style="left:0px;top:750px">李亚飞1317</span><span style="left:186px;top:936px">李亚飞1317</span><span style="left:375px;top:750px">李亚飞1317</span><span style="left:561px;top:936px">李亚飞1317</span><span style="left:750px;top:750px">李亚飞1317</span><span style="left:936px;top:936px">李亚飞1317</span><span style="left:1125px;top:750px">李亚飞1317</span><span style="left:1311px;top:936px">李亚飞1317</span><span style="left:1500px;top:750px">李亚飞1317</span><span style="left:1686px;top:936px">李亚飞1317</span><span style="left:1875px;top:750px">李亚飞1317</span></div>
</body></html>
